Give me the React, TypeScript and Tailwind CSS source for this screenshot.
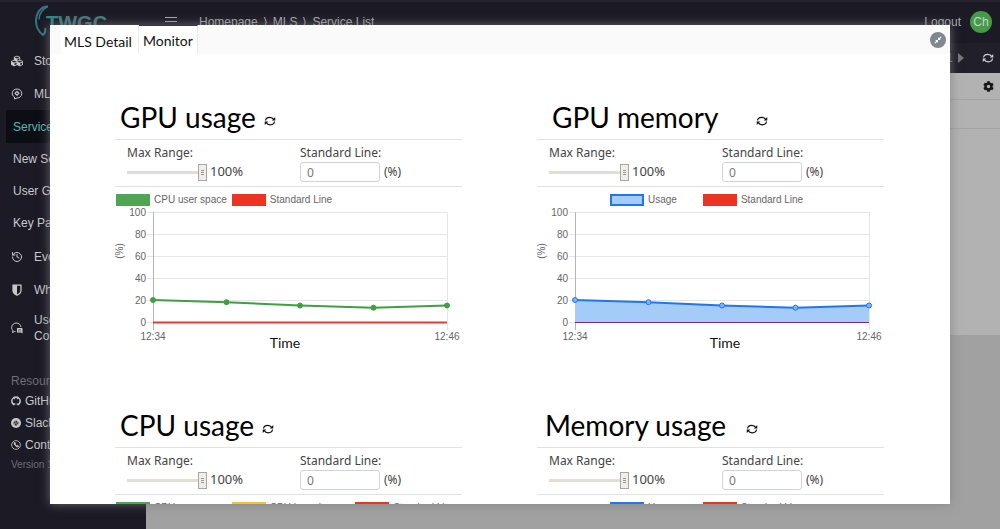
import { useState } from "react";
import { FaCubes, FaCompressAlt, FaSlack, FaCog } from "react-icons/fa";
import { LuHistory } from "react-icons/lu";

const HeadIcon = () => (
  <svg viewBox="0 0 24 24" className="w-3 h-3" fill="none" stroke="currentColor" strokeWidth="2">
    <path d="M7 22v-4C3.500 16 2 13 2.500 9.500 3.300 4.500 7.500 2 12 2c5.500 0 9.500 4 9.500 9.200S17.500 20 12 20l-5 2z" />
    <circle cx="12" cy="10.500" r="3" strokeWidth="2.500" />
    <path d="M12 5.500v2M12 13.500v2M7 10.500h2M15 10.500h2" />
  </svg>
);

const ShieldIcon = () => (
  <svg viewBox="0 0 24 24" className="w-3 h-3">
    <path d="M4 2h16v11c0 4-3 7-8 9.500C7 20 4 17 4 13z" fill="none" stroke="currentColor" strokeWidth="2.500" />
    <path d="M4 2h8v20C7 20 4 17 4 13z" fill="currentColor" />
  </svg>
);

const ChatIcon = () => (
  <svg viewBox="0 0 24 24" className="w-3 h-3">
    <path d="M9 19H7l-4 2 .6-4C1.500 14.500 1 12.500 1.500 9.500 2.500 5 6 2 10.500 2c5 0 8.500 3 9.500 8" fill="none" stroke="currentColor" strokeWidth="2" />
    <path d="M12 12h9a2 2 0 0 1 2 2v9l-3-2h-8z" fill="currentColor" />
    <path d="M14 15.500h6M14 18h6" stroke="#1b1a25" strokeWidth="1" />
  </svg>
);

const GithubIcon = () => (
  <svg viewBox="0 0 24 24" className="w-2.5 h-2.5" fill="none" stroke="currentColor" strokeWidth="3.500">
    <path d="M8 21C4 19.500 2 16 2 12 2 6.500 6.500 2.500 12 2.500S22 6.500 22 12c0 4-2 7.500-6 9" />
    <path d="M6 5l4 2M18 5l-4 2" strokeWidth="2.500" />
    <path d="M3 16c2 .5 2 3 6 2.500M9 22v-5M15 22v-5" strokeWidth="2" />
  </svg>
);

const PhoneIcon = () => (
  <svg viewBox="0 0 24 24" className="w-2.5 h-2.5" fill="none" stroke="currentColor" strokeWidth="2">
    <circle cx="12" cy="12" r="10.500" />
    <path d="M7.500 6.500c-1.500 3 5 11 9.500 10.500l1-2.500-3-1.500-1.500 1.200c-1.500-.8-2.700-2-3.300-3.500L11.300 9 9.700 6z" fill="currentColor" />
  </svg>
);

const SlackIcon = () => (
  <span className="flex items-center justify-center w-2.5 h-2.5 rounded-full bg-[#c9c9cc]">
    <FaSlack className="w-1.5 h-1.5 text-[#1b1a25]" />
  </span>
);

const RefreshIcon = () => (
  <svg viewBox="0 0 24 24" className="w-3 h-3" fill="none" stroke="currentColor" strokeWidth="2.500">
    <path d="M3 11C3.500 7 7 4.500 11.500 4.500c4 0 6.500 1.500 8 4.500M21 13c-.5 4-4 6.500-8.500 6.500-4 0-6.500-1.500-8-4.500" />
    <path d="M22.500 4v7h-7zM1.500 20v-7h7z" fill="currentColor" stroke="none" />
  </svg>
);

const Logo = () => (
  <a href="#home" aria-label="TWGC" className="flex self-start w-[146px] shrink-0 pl-[34px] pt-0.5">
    <svg viewBox="0 0 80 36" className="w-20 h-9">
      <defs>
        <linearGradient id="logo-fill">
          <stop offset="0" stopColor="#2f8a8e" />
          <stop offset="0.5" stopColor="#4b7379" />
          <stop offset="1" stopColor="#427d7e" />
        </linearGradient>
      </defs>
      <path d="M14 2.500C7 2 2 9 2 17c0 6 3 11 7 14 2-2 3-4 2-7" fill="none" stroke="#33767f" strokeWidth="2" />
      <path d="M14 2.500c-5 2-9 7-9 13" fill="none" stroke="#33767f" strokeWidth="1.500" />
      <text x="12" y="26" fontSize="20" fontWeight="700" fontFamily="Liberation Sans, sans-serif" fill="url(#logo-fill)">TWGC</text>
    </svg>
  </a>
);

const menuItems = [
  { label: "Storage", icon: <FaCubes className="w-3 h-3" /> },
  { label: "MLS", icon: <HeadIcon /> },
];

const subItems = ["Service List", "New Service", "User Guide", "Key Pair"];

const moreItems = [
  { label: "Event Log", icon: <LuHistory className="w-3 h-3" /> },
  { label: "What's New", icon: <ShieldIcon /> },
];

const resources = [
  { label: "GitHub", icon: <GithubIcon /> },
  { label: "Slack", icon: <SlackIcon /> },
  { label: "Contact", icon: <PhoneIcon /> },
];

const Sidebar = () => (
  <nav className="w-[146px] shrink-0 pt-px bg-[#1b1a25] text-xs text-[#c9c9cc]">
    {menuItems.map((item) => (
      <a key={item.label} href="#menu" className="flex items-center gap-[11px] h-[33px] pl-[11px]">
        {item.icon}
        {item.label}
      </a>
    ))}
    <div className="pb-px">
      {subItems.map((label) => (
        <a
          key={label}
          href="#sub"
          className={
            label === "Service List"
              ? "flex items-center h-[33px] ml-1.5 pl-[7px] bg-[#0d0d15] text-[#5fb5b0]"
              : "flex items-center h-8 pl-[13px]"
          }
        >
          {label}
        </a>
      ))}
    </div>
    {moreItems.map((item) => (
      <a key={item.label} href="#more" className="flex items-center gap-[11px] h-[33px] pl-[11px]">
        {item.icon}
        {item.label}
      </a>
    ))}
    <a href="#community" className="flex items-center gap-[11px] h-11 pl-[11px] leading-4">
      <ChatIcon />
      <span>User<br />Community</span>
    </a>
    <div className="mt-5 pl-[11px]">
      <h3 className="h-5 leading-[22px] text-[#6f6f76]">Resources</h3>
      {resources.map((item) => (
        <a key={item.label} href="#resource" className="flex items-center gap-1 h-[22px]">
          {item.icon}
          {item.label}
        </a>
      ))}
      <p className="text-[10px] leading-[18px] text-[#6f6f76]">Version 1.0</p>
    </div>
  </nav>
);

const Header = () => (
  <header className="flex items-center h-[43px] pb-0.5 bg-[#1b1a25] border-t-2 border-[#25242f] text-xs text-[#a9a9ae]">
    <Logo />
    <button aria-label="Toggle menu" className="ml-[19px] flex flex-col gap-[3px] w-3">
      <span className="w-full h-px bg-[#a9a9ae]" />
      <span className="w-full h-px bg-[#a9a9ae]" />
      <span className="w-full h-px bg-[#a9a9ae]" />
    </button>
    <div className="flex gap-[5px] ml-[22px]">
      <a href="#home">Homepage</a>
      <span>⟩</span>
      <a href="#mls">MLS</a>
      <span>⟩</span>
      <a href="#list">Service List</a>
    </div>
    <a href="#logout" className="ml-auto">Logout</a>
    <span className="flex items-center justify-center w-[22px] h-[22px] ml-[9px] mr-2 rounded-full bg-[#459a4a] text-[#c5d8c5]">Ch</span>
  </header>
);

const Background = () => (
  <div className="flex flex-col h-full">
    <Header />
    <div className="flex flex-1 min-h-0">
      <Sidebar />
      <main className="flex-1 bg-[#a1a1a1]">
        <div className="flex items-center justify-end h-[30px] px-1.5 bg-[#201f2a] text-xs text-[#77777c]">
          <span>1</span>
          <svg viewBox="0 0 6 10" className="w-1.5 h-2.5 ml-[5px] mr-[18px]"><path d="M0 0l6 5-6 5z" fill="currentColor" /></svg>
          <button aria-label="Refresh" className="text-[#d0d0d0]"><RefreshIcon /></button>
        </div>
        <div className="h-[262px] bg-[#b2b2b2]">
          <div className="flex items-center justify-end h-[27px] px-1.5 border-b border-[#a3a3a3]">
            <button aria-label="Settings"><FaCog className="w-[11px] h-[11px] text-[#151515]" /></button>
          </div>
          <div className="h-[29px] border-b border-[#a3a3a3]" />
        </div>
      </main>
    </div>
  </div>
);

const values = [20, 18, 15, 13, 15];
const ticks = [100, 80, 60, 40, 20, 0];
const left = 38;
const right = 332;
const yOf = (value: number) => 116 - value * 1.1;
const xOf = (index: number) => left + ((right - left) / (values.length - 1)) * index;

const UsageChart = ({ filled, timeX }: { filled: boolean; timeX: number }) => {
  const points = values.map((v, i) => `${xOf(i)},${yOf(v)}`).join(" ");
  const color = filled ? "#1f77f0" : "#3f9f42";

  return (
    <svg viewBox="0 0 347 144" className="block w-full" fontFamily="Liberation Sans, Arial, sans-serif" fontSize="10" fill="#666">
      {ticks.map((tick) => (
        <g key={tick}>
          <line x1={left - 6} x2={right} y1={yOf(tick) + 0.5} y2={yOf(tick) + 0.5} stroke="#e6e6e6" />
          <text x={31} y={yOf(tick) + 4} textAnchor="end">{tick}</text>
        </g>
      ))}
      <line x1={left + 0.5} x2={left + 0.5} y1="6" y2="124" stroke="#b5b5b5" />
      <line x1={right + 0.5} x2={right + 0.5} y1="6" y2="124" stroke="#e6e6e6" />
      {filled && <polygon points={`${points} ${right},116 ${left},116`} fill="#a5cbf8" />}
      <line x1={left} x2={right} y1="116.500" y2="116.500" stroke={filled ? "#8b2560" : "#ed3a30"} strokeWidth={filled ? 1 : 2} />
      <polyline points={points} fill="none" stroke={color} strokeWidth="2" />
      {values.map((v, i) => (
        <circle key={i} cx={xOf(i)} cy={yOf(v)} r="2.500" stroke={color} fill={filled ? "#7fb2f5" : color} />
      ))}
      <text x="8" y="45" textAnchor="middle" transform="rotate(-90 8 45)">(%)</text>
      <text x={left} y="134" textAnchor="middle">12:34</text>
      <text x={right} y="134" textAnchor="middle">12:46</text>
      <text x={timeX} y="142" textAnchor="middle" fontFamily="Lato, sans-serif" fontSize="14" fill="#111">Time</text>
    </svg>
  );
};

const greenKey = { label: "CPU user space", swatch: "bg-[#4fa552]" };
const yellowKey = { label: "CPU kernel space", swatch: "bg-[#f3c13f]" };
const redKey = { label: "Standard Line", swatch: "bg-[#ed3324]" };
const blueKey = { label: "Usage", swatch: "bg-[#a5cbf8] border-2 border-[#1f77f0]" };

const panels = [
  { id: "gpu", title: "GPU usage", head: "pl-[5px] gap-2", legend: "pl-px gap-[5px]", keys: [greenKey, redKey], filled: false, timeX: 170 },
  { id: "gpu-mem", title: "GPU memory", head: "pl-[15px] gap-[38px]", legend: "pl-[73px] gap-[26px]", keys: [blueKey, redKey], filled: true, timeX: 188 },
  { id: "cpu", title: "CPU usage", head: "pl-[5px] gap-2", legend: "pl-px gap-[5px]", keys: [greenKey, yellowKey, redKey], filled: false, timeX: 170 },
  { id: "mem", title: "Memory usage", head: "pl-2 gap-5", legend: "pl-[73px] gap-[26px]", keys: [blueKey, redKey], filled: true, timeX: 188 },
];

const MonitorPanel = ({ panel }: { panel: (typeof panels)[number] }) => {
  const [range, setRange] = useState(100);

  return (
    <section>
      <div className={`flex items-center h-10 pb-1.5 border-b border-[#e2e2e2] ${panel.head}`}>
        <h2 className="font-[Lato,sans-serif] text-[28px] leading-8 text-black">{panel.title}</h2>
        <button aria-label={`Refresh ${panel.title}`} className="mt-2 text-[#111]"><RefreshIcon /></button>
      </div>
      <div className="flex h-[47px] pl-3 pt-1 border-b border-[#e2e2e2] font-['Noto_Sans',sans-serif] text-xs text-[#444]">
        <div className="w-[173px]">
          <label htmlFor={`${panel.id}-range`} className="block leading-[18px]">Max Range:</label>
          <div className="flex items-center gap-[3px] h-5">
            <input
              id={`${panel.id}-range`}
              type="range"
              value={range}
              onChange={(e) => setRange(Number(e.target.value))}
              className="appearance-none w-20 h-[3px] bg-[#e2ddd6] [&::-webkit-slider-thumb]:appearance-none [&::-webkit-slider-thumb]:w-[9px] [&::-webkit-slider-thumb]:h-[17px] [&::-webkit-slider-thumb]:border [&::-webkit-slider-thumb]:border-[#aaa59d] [&::-webkit-slider-thumb]:bg-[#f0eeea] [&::-webkit-slider-thumb]:bg-[linear-gradient(#999,#999),linear-gradient(#999,#999),linear-gradient(#999,#999)] [&::-webkit-slider-thumb]:bg-[length:3px_1px] [&::-webkit-slider-thumb]:[background-position:2px_5px,2px_7px,2px_9px] [&::-webkit-slider-thumb]:bg-no-repeat"
            />
            <span className="text-[13px]">{range}%</span>
          </div>
        </div>
        <div>
          <label htmlFor={`${panel.id}-line`} className="block leading-[18px]">Standard Line:</label>
          <div className="flex items-center gap-1 h-5">
            <input id={`${panel.id}-line`} type="text" defaultValue="0" className="w-20 h-5 px-1.5 bg-white border border-[#cfd4da] rounded-[3px] text-[#777]" />
            <span>(%)</span>
          </div>
        </div>
      </div>
      <div className={`flex pt-[7px] font-['Liberation_Sans',Arial,sans-serif] text-[10px] leading-3 text-[#666] ${panel.legend}`}>
        {panel.keys.map((key) => (
          <div key={key.label} className="flex gap-1">
            <span className={`w-[34px] h-3 ${key.swatch}`} />
            {key.label}
          </div>
        ))}
      </div>
      <UsageChart filled={panel.filled} timeX={panel.timeX} />
    </section>
  );
};

const App = () => {
  return (
    <div className="relative h-screen overflow-hidden font-['Liberation_Sans',Arial,sans-serif]">
      <Background />
      <div
        role="dialog"
        aria-label="Monitor"
        className="absolute inset-x-[50px] top-[25px] bottom-[25px] overflow-hidden bg-white shadow-[0_0_10px_rgba(125,125,125,0.8)]"
      >
        <div role="tablist" className="flex h-[29px] bg-[#fafafa] font-[Lato,sans-serif] text-sm text-[#111]">
          <button role="tab" aria-selected="false" className="ml-[11px] pl-[3px] pr-1.5 pt-1 bg-white border-r border-[#e8e8e8]">MLS Detail</button>
          <button role="tab" aria-selected="true" className="px-1 pt-0.5 bg-white border-r border-t border-r-[#e8e8e8] border-t-[#35344a]">Monitor</button>
          <button aria-label="Close" className="flex items-center justify-center w-4 h-4 mt-[7px] ml-auto mr-1 rounded-full bg-[#7f8890] text-white">
            <FaCompressAlt className="w-2 h-2" />
          </button>
        </div>
        <div className="grid grid-cols-2 gap-x-[75px] gap-y-[58px] pt-[46px] pl-[65px] pr-[66px]">
          {panels.map((panel) => (
            <MonitorPanel key={panel.id} panel={panel} />
          ))}
        </div>
      </div>
    </div>
  );
};

export default App;
